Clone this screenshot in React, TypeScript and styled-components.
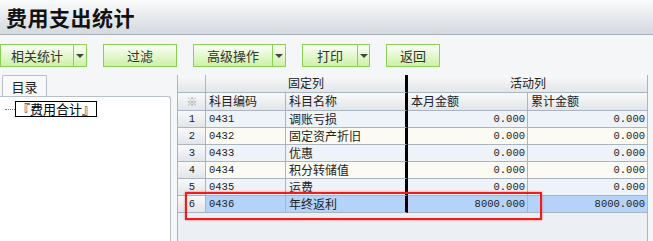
import styled, { createGlobalStyle } from "styled-components";

const GlobalStyle = createGlobalStyle`
  html, body {
    margin: 0;
    padding: 0;
    background: #f4f6f8;
  }
  body {
    font-family: "Noto Sans CJK SC", "Liberation Sans", sans-serif;
    color: #222;
  }
`;

const Page = styled.div`
  width: 653px;
  height: 241px;
  overflow: hidden;
  position: relative;
  background: #f4f6f8;
`;

const TitleBar = styled.div`
  height: 34px;
  border-bottom: 1px solid #a6adb4;
  background: linear-gradient(#fafbfc, #d3d9de);
  display: flex;
  align-items: center;
  padding-left: 6px;
`;

const Title = styled.h1`
  margin: 0;
  font-size: 21px;
  line-height: 1;
  font-weight: 600;
  letter-spacing: 0.5px;
  color: #111;
`;

const Toolbar = styled.div`
  display: flex;
  gap: 16px;
  margin-top: 9px;
  height: 23px;
`;

const BtnGroup = styled.div`
  display: flex;
  height: 23px;
`;

const Btn = styled.button<{ w: number }>`
  width: ${({ w }) => w}px;
  height: 23px;
  box-sizing: border-box;
  border: 1px solid #8ccf55;
  background: linear-gradient(#fbfef7, #cdf1a6);
  font-family: inherit;
  font-size: 13px;
  line-height: 1;
  color: #333;
  padding: 0;
  margin: 0;
  display: flex;
  align-items: center;
  justify-content: center;
`;

const Drop = styled(Btn)`
  border-left: none;
  &::after {
    content: "";
    border-left: 4px solid transparent;
    border-right: 4px solid transparent;
    border-top: 4px solid #444;
    margin-top: 1px;
  }
`;

const Content = styled.div`
  display: flex;
  margin-top: 8px;
  height: 166px;
`;

const Side = styled.div`
  width: 171px;
  display: flex;
  flex-direction: column;
`;

const Tab = styled.div`
  margin-left: 2px;
  width: 45px;
  height: 21px;
  box-sizing: border-box;
  border: 1px solid #b6bec7;
  border-bottom: none;
  border-radius: 2px 2px 0 0;
  background: #f8f9fa;
  font-size: 13px;
  line-height: 1;
  display: flex;
  align-items: center;
  justify-content: center;
`;

const SideBody = styled.div`
  flex: 1;
  box-sizing: border-box;
  border-top: 1px solid #b6bec7;
  border-right: 1px solid #b6bec7;
  border-top-right-radius: 3px;
  background: #fff;
  padding: 4px 0 0 5px;
`;

const TreeItem = styled.div`
  display: flex;
  align-items: center;
`;

const Dots = styled.span`
  width: 10px;
  border-top: 1px dotted #777;
`;

const TreeLabel = styled.span`
  border: 1px solid #000;
  font-family: "Noto Sans CJK SC", "Noto Sans CJK JP", sans-serif;
  font-size: 13px;
  line-height: 14px;
  padding: 0 1px;
  color: #000;
`;

const Grid = styled.div`
  margin-left: 6px;
  width: 471px;
  box-sizing: border-box;
  border-left: 1px solid #abb5c1;
  border-right: 1px solid #abb5c1;
  background: #eceff3;
`;

const Row = styled.div<{ bg?: string; h: number }>`
  display: grid;
  grid-template-columns: 28px 80px 122px 120px 120px;
  height: ${({ h }) => h}px;
  background: ${({ bg }) => bg || "transparent"};
`;

const Cell = styled.div<{
  align?: "left" | "right" | "center";
  span?: number;
  thick?: boolean;
  head?: boolean;
  mono?: boolean;
}>`
  grid-column: span ${({ span }) => span || 1};
  box-sizing: border-box;
  border-bottom: 1px solid #abb5c1;
  border-right: ${({ thick }) => (thick ? "3px solid #000" : "1px solid #abb5c1")};
  background: ${({ head }) => (head ? "linear-gradient(#f8f9fa, #e2e6e9)" : "transparent")};
  display: flex;
  align-items: center;
  justify-content: ${({ align }) =>
    align === "right" ? "flex-end" : align === "center" ? "center" : "flex-start"};
  padding: 0 2px 1px 3px;
  font-family: ${({ mono }) =>
    mono ? '"Liberation Mono", "DejaVu Sans Mono", monospace' : "inherit"};
  font-size: ${({ mono }) => (mono ? "10.5px" : "12px")};
  line-height: 12px;
  white-space: nowrap;
  overflow: hidden;
`;

const Star = styled.span`
  color: #a0a6ad;
  font-size: 11px;
`;

const Highlight = styled.div`
  position: absolute;
  left: 185px;
  top: 192px;
  width: 357px;
  height: 28px;
  box-sizing: border-box;
  border: 2px solid #f01c1c;
  box-shadow: 0 0 2px rgba(255, 60, 60, 0.7);
  pointer-events: none;
`;

const rows = [
  { code: "0431", name: "调账亏损", month: "0.000", total: "0.000" },
  { code: "0432", name: "固定资产折旧", month: "0.000", total: "0.000" },
  { code: "0433", name: "优惠", month: "0.000", total: "0.000" },
  { code: "0434", name: "积分转储值", month: "0.000", total: "0.000" },
  { code: "0435", name: "运费", month: "0.000", total: "0.000" },
  { code: "0436", name: "年终返利", month: "8000.000", total: "8000.000" },
];

const rowBg = (i: number) =>
  i === 5 ? "#b5d2f9" : i % 2 === 0 ? "#eef2f9" : "#fbfbf3";

export default function App() {
  return (
    <Page>
      <GlobalStyle />
      <TitleBar>
        <Title>费用支出统计</Title>
      </TitleBar>

      <Toolbar>
        <BtnGroup>
          <Btn w={74}>相关统计</Btn>
          <Drop w={13} />
        </BtnGroup>
        <Btn w={74}>过滤</Btn>
        <BtnGroup>
          <Btn w={80}>高级操作</Btn>
          <Drop w={13} />
        </BtnGroup>
        <BtnGroup>
          <Btn w={56}>打印</Btn>
          <Drop w={12} />
        </BtnGroup>
        <Btn w={54}>返回</Btn>
      </Toolbar>

      <Content>
        <Side>
          <Tab>目录</Tab>
          <SideBody>
            <TreeItem>
              <Dots />
              <TreeLabel>『费用合计』</TreeLabel>
            </TreeItem>
          </SideBody>
        </Side>

        <Grid>
          <Row h={18}>
            <Cell head />
            <Cell head span={2} align="center" thick>
              固定列
            </Cell>
            <Cell head span={2} align="center">
              活动列
            </Cell>
          </Row>
          <Row h={18}>
            <Cell head align="center">
              <Star>※</Star>
            </Cell>
            <Cell head>科目编码</Cell>
            <Cell head thick>科目名称</Cell>
            <Cell head>本月金额</Cell>
            <Cell head>累计金额</Cell>
          </Row>
          {rows.map((r, i) => (
            <Row key={r.code} h={17} bg={rowBg(i)}>
              <Cell head align="center" mono>
                {i + 1}
              </Cell>
              <Cell mono>{r.code}</Cell>
              <Cell thick>{r.name}</Cell>
              <Cell mono align="right">
                {r.month}
              </Cell>
              <Cell mono align="right">
                {r.total}
              </Cell>
            </Row>
          ))}
        </Grid>
      </Content>

      <Highlight />
    </Page>
  );
}
